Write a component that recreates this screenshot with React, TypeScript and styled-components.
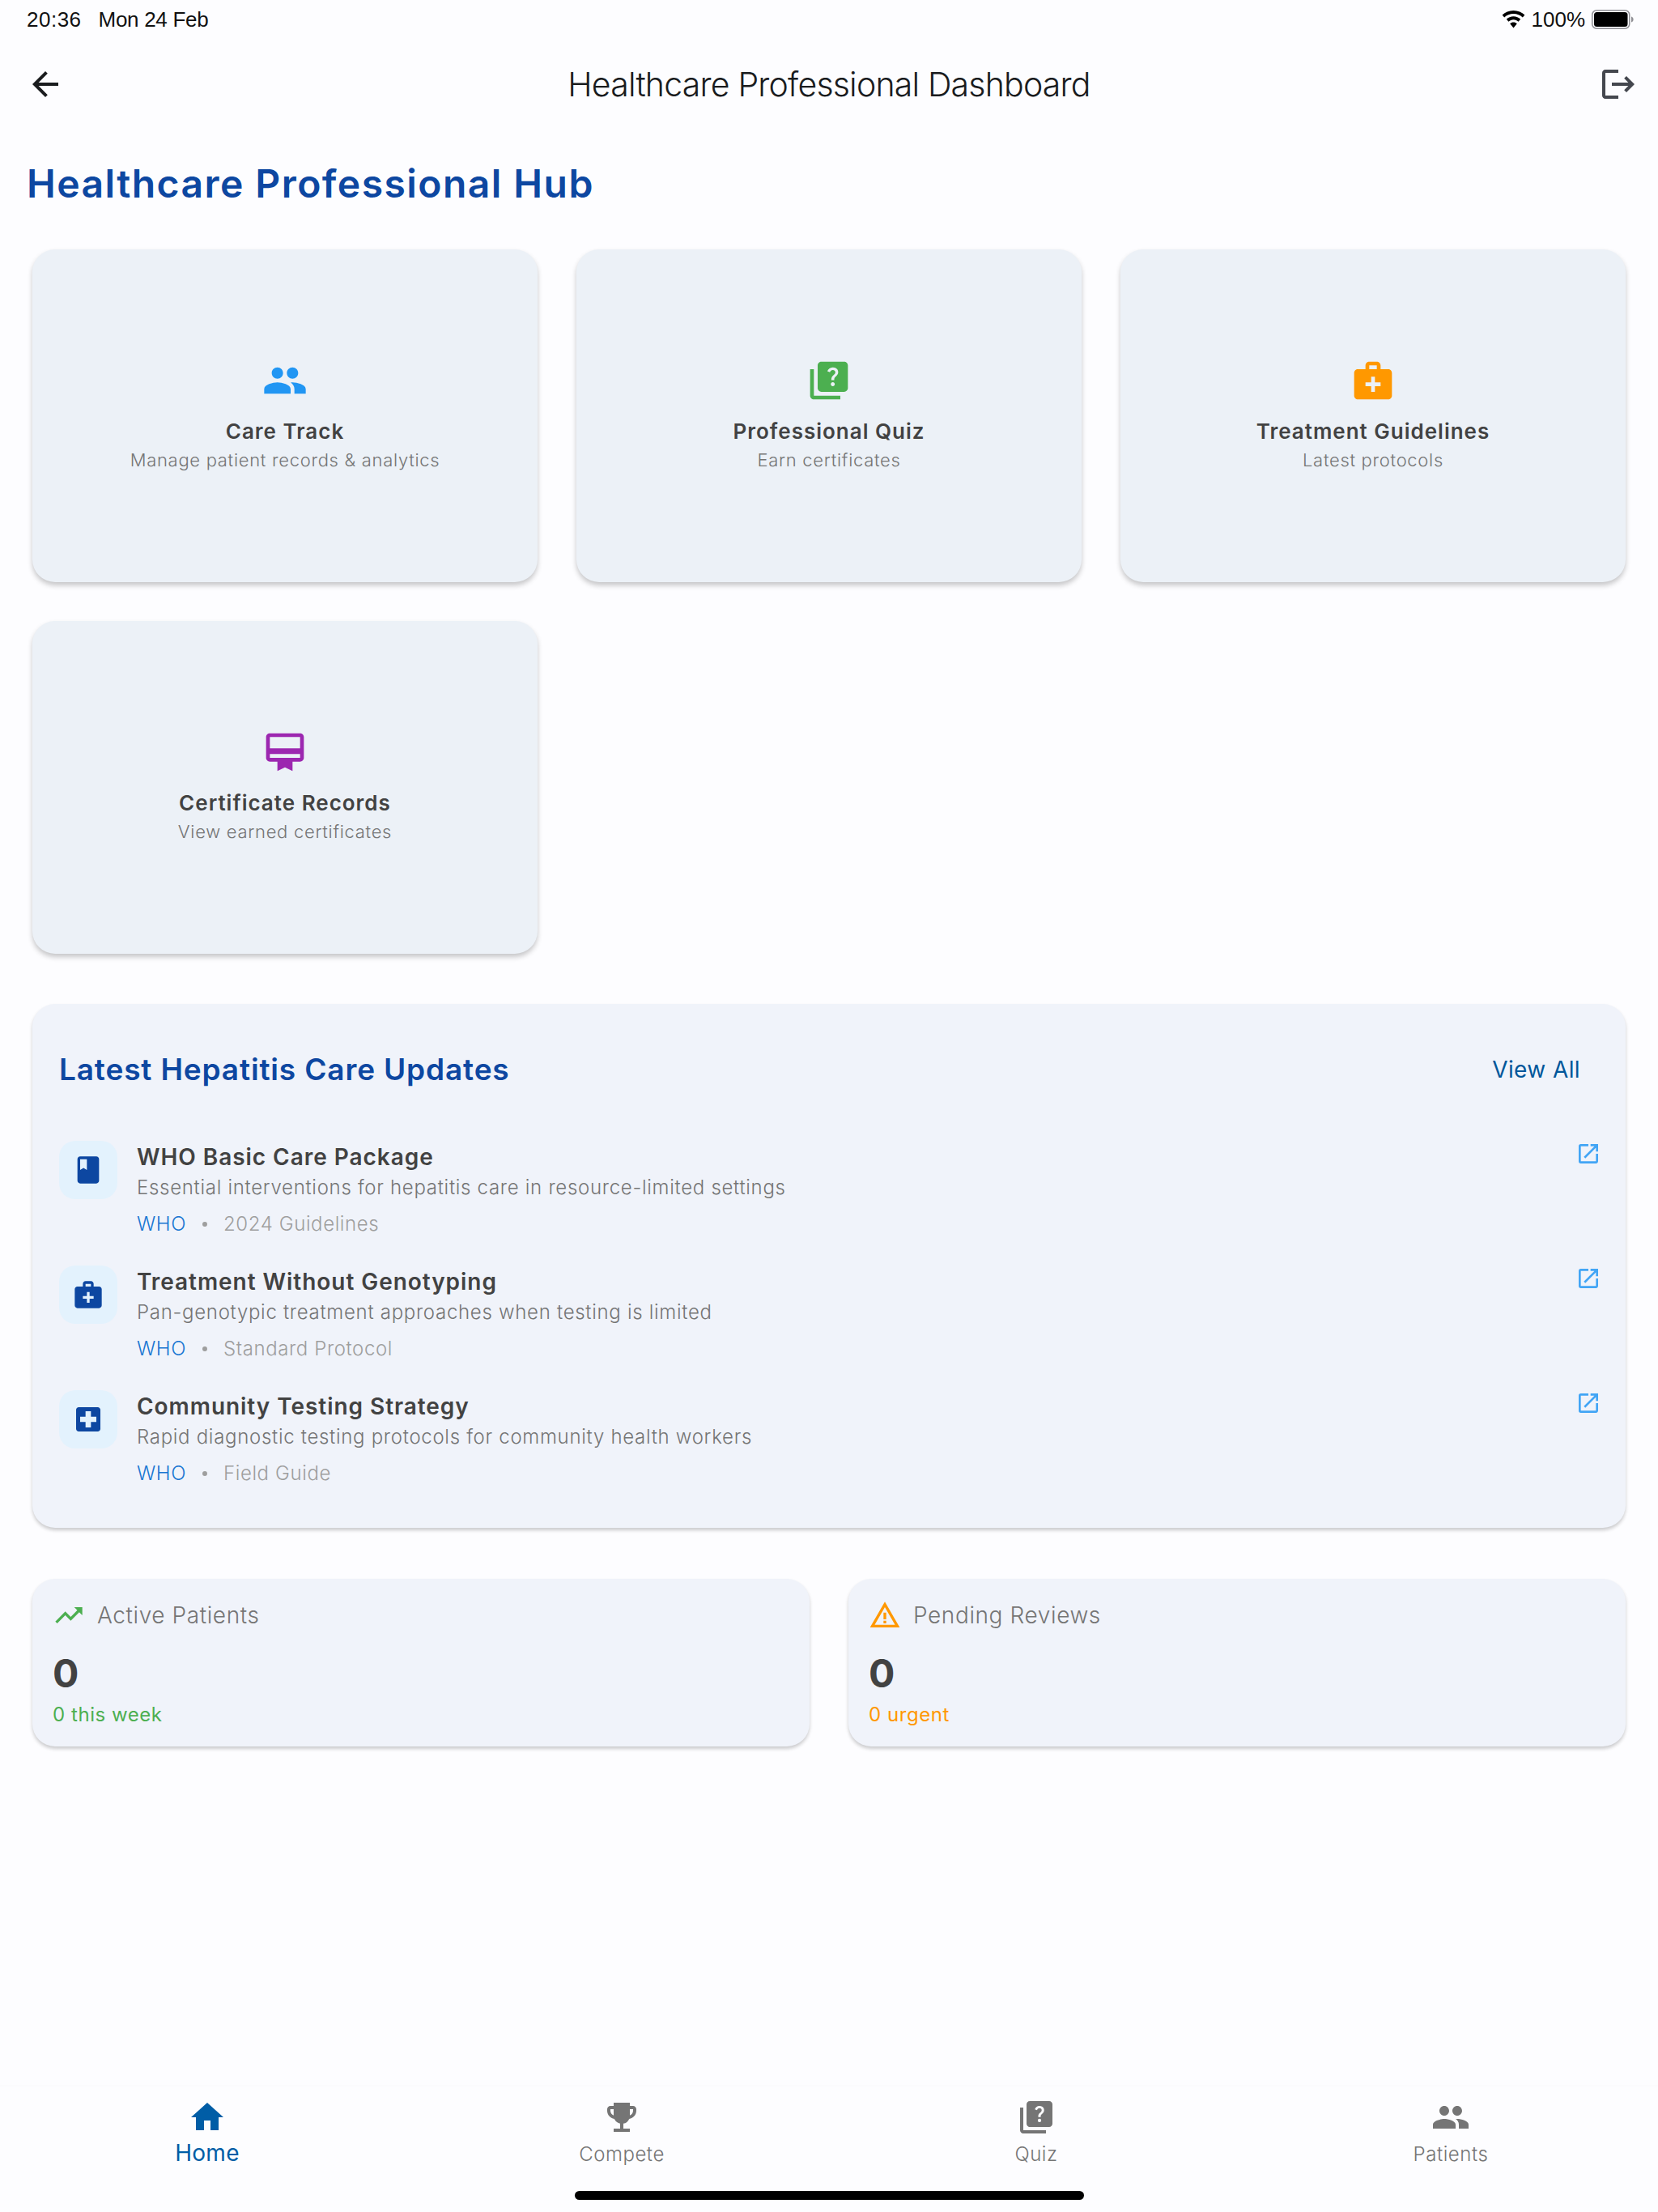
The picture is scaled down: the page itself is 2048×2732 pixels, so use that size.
import React from "react";
import styled, { createGlobalStyle } from "styled-components";
import {
  MdArrowBack, MdLogout, MdPeople, MdQuiz, MdMedicalServices, MdCardMembership,
  MdBook, MdLocalHospital, MdOpenInNew, MdTrendingUp, MdWarningAmber, MdHome, MdEmojiEvents,
} from "react-icons/md";

const Global = createGlobalStyle`
  html, body { margin: 0; padding: 0; background: #fdfdff; }
  * { box-sizing: border-box; }
`;

const Page = styled.div`
  width: 2048px;
  height: 2732px;
  display: flex;
  flex-direction: column;
  background: #fdfdff;
  font-family: Inter, "Noto Sans", sans-serif;
  overflow: hidden;
`;

const StatusBar = styled.div`
  height: 48px;
  padding: 0 30px 0 33px;
  display: flex;
  align-items: center;
  justify-content: space-between;
  font-family: "Liberation Sans", sans-serif;
  font-size: 26px;
  color: #111;
`;
const StatusGroup = styled.div`
  display: flex;
  align-items: center;
  gap: ${(p: { $gap: number }) => p.$gap}px;
`;
const StatusTime = styled.span`
  letter-spacing: 0.5px;
`;
const StatusDate = styled.span`
  letter-spacing: -0.3px;
`;

const AppBar = styled.header`
  height: 112px;
  padding: 0 25px 0 32px;
  display: flex;
  align-items: center;
  justify-content: space-between;
`;
const AppBarIcon = styled.span<{ $color: string }>`
  display: flex;
  color: ${(p) => p.$color};
  font-size: 48px;
`;
const AppBarTitle = styled.h1`
  margin: 0 0 0 -7px;
  font-size: 41px;
  font-weight: 300;
  letter-spacing: -0.8px;
  color: #1a1c1e;
`;

const Content = styled.main`
  flex: 1;
  padding: 0 40px;
  display: flex;
  flex-direction: column;
`;
const HubTitle = styled.h2`
  margin: 37px -7px 51px;
  font-size: 48px;
  line-height: 60px;
  font-weight: 600;
  letter-spacing: 1.45px;
  color: #0d47a1;
`;
const FeatureGrid = styled.section`
  display: grid;
  grid-template-columns: repeat(3, 1fr);
  column-gap: 48px;
  row-gap: 48px;
`;
const FeatureCard = styled.div`
  height: 411px;
  border-radius: 28px;
  background: #ecf1f7;
  box-shadow: 0 4px 6px rgba(0, 0, 0, 0.22);
  display: flex;
  flex-direction: column;
  align-items: center;
  justify-content: center;
`;
const FeatureIcon = styled.span<{ $color: string }>`
  display: flex;
  font-size: 56px;
  color: ${(p) => p.$color};
`;
const FeatureTitle = styled.div`
  margin-top: 17px;
  font-size: 26px;
  line-height: 36px;
  font-weight: 600;
  letter-spacing: 1px;
  color: #424242;
`;
const FeatureSub = styled.div`
  font-size: 22px;
  line-height: 34px;
  font-weight: 350;
  letter-spacing: 0.7px;
  color: #757575;
`;

const UpdatesCard = styled.section`
  margin-top: 62px;
  padding: 57px 33px 50px 33px;
  border-radius: 28px;
  background: #f0f3fa;
  box-shadow: 0 3px 4px rgba(0, 0, 0, 0.2);
`;
const UpdatesHeader = styled.div`
  height: 46px;
  margin-bottom: 66px;
  padding-right: 23px;
  display: flex;
  align-items: center;
  justify-content: space-between;
`;
const UpdatesTitle = styled.h3`
  margin: 0;
  font-size: 37px;
  font-weight: 600;
  letter-spacing: 0.85px;
  color: #0d47a1;
`;
const ViewAll = styled.span`
  padding-top: 2px;
  font-size: 28px;
  font-weight: 400;
  letter-spacing: 0.4px;
  color: #01579b;
`;
const UpdateList = styled.div`
  display: flex;
  flex-direction: column;
  gap: 34px;
`;
const UpdateRow = styled.article`
  height: 120px;
  display: flex;
  align-items: flex-start;
`;
const UpdateIcon = styled.span`
  width: 72px;
  height: 72px;
  flex: none;
  margin-right: 24px;
  border-radius: 20px;
  background: #e3f2fd;
  display: flex;
  align-items: center;
  justify-content: center;
  font-size: 40px;
  color: #0d47a1;
`;
const UpdateBody = styled.div`
  flex: 1;
  padding-top: 2px;
`;
const UpdateTitle = styled.div`
  font-size: 28px;
  line-height: 36px;
  font-weight: 600;
  letter-spacing: 0.95px;
  color: #424242;
`;
const UpdateDesc = styled.div`
  margin-top: 3px;
  font-size: 24px;
  line-height: 34px;
  font-weight: 350;
  letter-spacing: 0.7px;
  color: #757575;
`;
const UpdateMeta = styled.div`
  margin-top: 11px;
  display: flex;
  align-items: center;
  font-size: 24px;
  line-height: 34px;
  font-weight: 350;
  letter-spacing: 0.6px;
  color: #9e9e9e;
`;
const Source = styled.span`
  color: #1976d2;
`;
const Dot = styled.span`
  width: 6px;
  height: 6px;
  margin: 0 20px;
  border-radius: 50%;
  background: #9e9e9e;
`;
const OpenLink = styled.span`
  display: flex;
  margin: 0 -3px 0 12px;
  font-size: 32px;
  color: #42a5f5;
`;

const StatsRow = styled.section`
  margin-top: 63px;
  display: grid;
  grid-template-columns: 1fr 1fr;
  column-gap: 48px;
`;
const StatCard = styled.div`
  height: 207px;
  padding: 24px 25px 0;
  border-radius: 28px;
  background: #f0f3fa;
  box-shadow: 0 3px 4px rgba(0, 0, 0, 0.2);
`;
const StatHead = styled.div`
  height: 42px;
  display: flex;
  align-items: center;
  gap: 15px;
  font-size: 28px;
  font-weight: 350;
  letter-spacing: 0.6px;
  color: #757575;
`;
const StatIcon = styled.span<{ $color: string }>`
  display: flex;
  font-size: 40px;
  color: ${(p) => p.$color};
`;
const StatValue = styled.div`
  margin-top: 21px;
  font-size: 48px;
  line-height: 60px;
  font-weight: 700;
  color: #424242;
`;
const StatNote = styled.div<{ $color: string }>`
  margin-top: 4px;
  font-size: 24px;
  line-height: 34px;
  letter-spacing: 0.55px;
  color: ${(p) => p.$color};
`;

const BottomNav = styled.nav`
  border-top: 2px solid #fbfbfd;
  height: 157px;
  display: flex;
  flex-direction: column;
`;
const NavItems = styled.div`
  height: 129px;
  display: grid;
  grid-template-columns: repeat(4, 1fr);
`;
const NavItem = styled.div<{ $active?: boolean }>`
  padding-top: 14px;
  display: flex;
  flex-direction: column;
  align-items: center;
  font-size: ${(p) => (p.$active ? 28 : 24)}px;
  font-weight: ${(p) => (p.$active ? 400 : 350)};
  line-height: ${(p) => (p.$active ? 36 : 39)}px;
  letter-spacing: ${(p) => (p.$active ? 0.3 : 0.55)}px;
  color: ${(p) => (p.$active ? "#005da6" : "#757575")};
`;
const NavIcon = styled.span`
  display: flex;
  font-size: 48px;
  margin-bottom: 2px;
`;
const HomeIndicator = styled.div`
  width: 629px;
  height: 11px;
  margin-left: 710px;
  border-radius: 6px;
  background: #000;
`;

const features = [
  { icon: <MdPeople />, color: "#2196f3", title: "Care Track", sub: "Manage patient records & analytics" },
  { icon: <MdQuiz />, color: "#4caf50", title: "Professional Quiz", sub: "Earn certificates" },
  { icon: <MdMedicalServices />, color: "#ff9800", title: "Treatment Guidelines", sub: "Latest protocols" },
  { icon: <MdCardMembership />, color: "#9c27b0", title: "Certificate Records", sub: "View earned certificates" },
];

const updates = [
  { icon: <MdBook />, title: "WHO Basic Care Package", desc: "Essential interventions for hepatitis care in resource-limited settings", meta: "2024 Guidelines" },
  { icon: <MdMedicalServices />, title: "Treatment Without Genotyping", desc: "Pan-genotypic treatment approaches when testing is limited", meta: "Standard Protocol" },
  { icon: <MdLocalHospital />, title: "Community Testing Strategy", desc: "Rapid diagnostic testing protocols for community health workers", meta: "Field Guide" },
];

const nav = [
  { icon: <MdHome />, label: "Home", active: true },
  { icon: <MdEmojiEvents />, label: "Compete" },
  { icon: <MdQuiz />, label: "Quiz" },
  { icon: <MdPeople />, label: "Patients" },
];

const Wifi = () => (
  <svg width="29" height="22" viewBox="0 0 29 22" fill="#000">
    <path d="M14.5 0C9 0 4.2 2.1.6 5.6l2.6 2.9C6.1 5.7 10.1 4 14.5 4s8.4 1.7 11.3 4.5l2.6-2.9C24.8 2.1 20 0 14.5 0z" />
    <path d="M14.5 7.3c-3.4 0-6.4 1.3-8.7 3.5l2.7 2.9c1.6-1.5 3.7-2.4 6-2.4s4.4.9 6 2.4l2.7-2.9c-2.3-2.2-5.3-3.5-8.7-3.5z" />
    <path d="M14.5 14.6c-1.7 0-3.2.6-4.3 1.7l4.3 5.1 4.3-5.1c-1.1-1.1-2.6-1.7-4.3-1.7z" />
  </svg>
);
const Battery = () => (
  <svg width="52" height="24" viewBox="0 0 52 24">
    <rect x="0.75" y="0.75" width="46" height="22.5" rx="5.5" fill="none" stroke="#8e8e93" strokeWidth="1.5" />
    <rect x="3" y="3" width="41.5" height="18" rx="3.5" fill="#000" />
    <path d="M49 8.5c1.6.5 2.6 1.9 2.6 3.5s-1 3-2.6 3.5z" fill="#8e8e93" />
  </svg>
);

export default function App() {
  return (
    <Page>
      <Global />
      <StatusBar>
        <StatusGroup $gap={21}>
          <StatusTime>20:36</StatusTime>
          <StatusDate>Mon 24 Feb</StatusDate>
        </StatusGroup>
        <StatusGroup $gap={8}>
          <Wifi />
          <span>100%</span>
          <Battery />
        </StatusGroup>
      </StatusBar>
      <AppBar>
        <AppBarIcon $color="#1a1c1e"><MdArrowBack /></AppBarIcon>
        <AppBarTitle>Healthcare Professional Dashboard</AppBarTitle>
        <AppBarIcon $color="#44474e"><MdLogout /></AppBarIcon>
      </AppBar>
      <Content>
        <HubTitle>Healthcare Professional Hub</HubTitle>
        <FeatureGrid>
          {features.map((f) => (
            <FeatureCard key={f.title}>
              <FeatureIcon $color={f.color}>{f.icon}</FeatureIcon>
              <FeatureTitle>{f.title}</FeatureTitle>
              <FeatureSub>{f.sub}</FeatureSub>
            </FeatureCard>
          ))}
        </FeatureGrid>
        <UpdatesCard>
          <UpdatesHeader>
            <UpdatesTitle>Latest Hepatitis Care Updates</UpdatesTitle>
            <ViewAll>View All</ViewAll>
          </UpdatesHeader>
          <UpdateList>
            {updates.map((u) => (
              <UpdateRow key={u.title}>
                <UpdateIcon>{u.icon}</UpdateIcon>
                <UpdateBody>
                  <UpdateTitle>{u.title}</UpdateTitle>
                  <UpdateDesc>{u.desc}</UpdateDesc>
                  <UpdateMeta>
                    <Source>WHO</Source>
                    <Dot />
                    <span>{u.meta}</span>
                  </UpdateMeta>
                </UpdateBody>
                <OpenLink><MdOpenInNew /></OpenLink>
              </UpdateRow>
            ))}
          </UpdateList>
        </UpdatesCard>
        <StatsRow>
          <StatCard>
            <StatHead>
              <StatIcon $color="#4caf50"><MdTrendingUp /></StatIcon>
              Active Patients
            </StatHead>
            <StatValue>0</StatValue>
            <StatNote $color="#4caf50">0 this week</StatNote>
          </StatCard>
          <StatCard>
            <StatHead>
              <StatIcon $color="#ff9800"><MdWarningAmber /></StatIcon>
              Pending Reviews
            </StatHead>
            <StatValue>0</StatValue>
            <StatNote $color="#ff9800">0 urgent</StatNote>
          </StatCard>
        </StatsRow>
      </Content>
      <BottomNav>
        <NavItems>
          {nav.map((n) => (
            <NavItem key={n.label} $active={n.active}>
              <NavIcon>{n.icon}</NavIcon>
              {n.label}
            </NavItem>
          ))}
        </NavItems>
        <HomeIndicator />
      </BottomNav>
    </Page>
  );
}
